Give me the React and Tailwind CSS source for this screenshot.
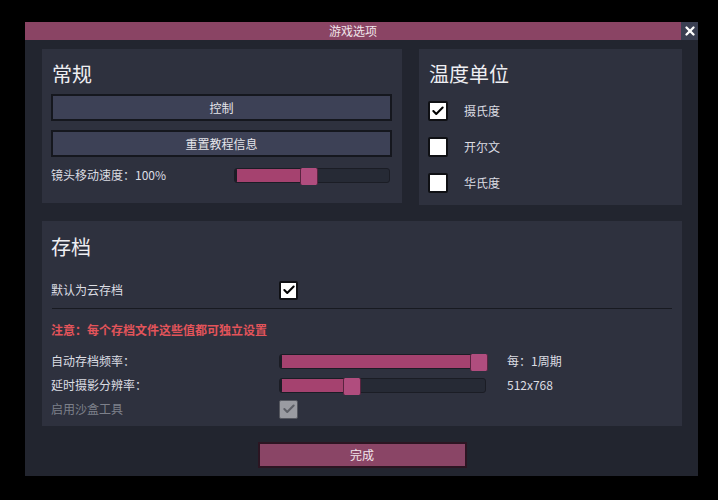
import { Check, X } from 'lucide-react'

const FONT = { fontFamily: '"Noto Sans CJK SC", "Noto Sans", sans-serif' }

function Slider({ width, fill }) {
  return (
    <div className="relative h-[15px] rounded-[3px] border border-[#1b1d25] bg-[#262a35]" style={{ width }}>
      <div className="absolute left-0 top-0 h-full rounded-l-[2px] border-l-2 border-[#1b1d25] bg-[#a5426f]" style={{ width: fill }} />
      <div
        className="absolute -top-[1px] h-[17px] w-[18px] rounded-[2px] border-x border-[#5a2440] bg-[#b04d7e]"
        style={{ left: fill - 1 }}
      />
    </div>
  )
}

function Box({ checked, disabled, size = 20 }) {
  return (
    <div
      className={
        disabled
          ? 'flex items-center justify-center rounded-[2px] bg-[#9a9ba1] border border-[#55575f]'
          : 'flex items-center justify-center rounded-[2px] bg-white border-2 border-[#0f1014]'
      }
      style={{ width: size, height: size }}
    >
      {checked && (
        <Check className={disabled ? 'w-3.5 h-3.5 text-[#5d5f66]' : 'w-3.5 h-3.5 text-black'} strokeWidth={3.5} />
      )}
    </div>
  )
}

function MenuButton({ children }) {
  return (
    <div className="h-[27px] w-full flex items-center justify-center border-2 border-[#15171e] bg-[#3d4156] text-[12px] text-[#e4e4ea]">
      {children}
    </div>
  )
}

export default function App() {
  return (
    <div className="w-[718px] h-[500px] bg-black pt-[22px] pl-[25px]" style={FONT}>
      <div className="w-[673px] h-[454px] flex flex-col bg-[#22252f]">
        {/* title bar */}
        <div className="h-[18px] flex shrink-0">
          <div className="flex-1 flex items-center justify-center bg-[#8a4464] text-[12px] text-[#f0e4ea]">
            游戏选项
          </div>
          <div className="w-[17px] flex items-center justify-center bg-[#3a3f52]">
            <X className="w-3.5 h-3.5 text-white" strokeWidth={4} />
          </div>
        </div>

        <div className="flex-1 flex flex-col pt-[9px] pl-[17px] pr-[16px]">
          <div className="flex gap-[17px] h-[156px]">
            {/* general */}
            <div className="w-[360px] h-[154px] bg-[#2e313e] px-[9px] pt-[11px]">
              <div className="text-[20px] leading-[28px] text-[#eeeef2] pl-[1px]">常规</div>
              <div className="mt-[6px] flex flex-col gap-[9px] pr-[1px]">
                <MenuButton>控制</MenuButton>
                <MenuButton>重置教程信息</MenuButton>
              </div>
              <div className="mt-[9px] flex items-center justify-between pr-[3px]">
                <span className="text-[12px] text-[#dcdde3]">镜头移动速度：100%</span>
                <Slider width={156} fill={66} />
              </div>
            </div>

            {/* temperature */}
            <div className="flex-1 bg-[#2e313e] pl-[9px] pt-[11px]">
              <div className="text-[20px] leading-[28px] text-[#eeeef2] pl-[1px]">温度单位</div>
              <div className="mt-[13px] flex flex-col gap-[16px]">
                {[
                  ['摄氏度', true],
                  ['开尔文', false],
                  ['华氏度', false],
                ].map(([label, on]) => (
                  <div key={label} className="flex items-center gap-[16px]">
                    <Box checked={on} />
                    <span className="text-[12px] text-[#dcdde3]">{label}</span>
                  </div>
                ))}
              </div>
            </div>
          </div>

          {/* saves */}
          <div className="mt-[16px] h-[205px] bg-[#2e313e] px-[9px] pt-[12px]">
            <div className="text-[20px] leading-[28px] text-[#eeeef2]">存档</div>
            <div className="mt-[19px] flex items-center h-[20px]">
              <span className="w-[228px] text-[12px] text-[#dcdde3]">默认为云存档</span>
              <Box checked size={19} />
            </div>
            <div className="mt-[8px] mx-[1px] h-[1px] bg-[#181a21]" />
            <div className="mt-[12px] text-[12px] font-bold text-[#e2545a]">注意：每个存档文件这些值都可独立设置</div>
            <div className="mt-[14px] flex items-center h-[16px]">
              <span className="w-[228px] text-[12px] text-[#dcdde3]">自动存档频率：</span>
              <Slider width={209} fill={191} />
              <span className="ml-[19px] text-[12px] text-[#dcdde3]">每：1周期</span>
            </div>
            <div className="mt-[8px] flex items-center h-[16px]">
              <span className="w-[228px] text-[12px] text-[#dcdde3]">延时摄影分辨率：</span>
              <Slider width={207} fill={64} />
              <span className="ml-[21px] text-[12px] text-[#dcdde3]">512x768</span>
            </div>
            <div className="mt-[6px] flex items-center h-[20px]">
              <span className="w-[228px] text-[12px] text-[#7d808a]">启用沙盒工具</span>
              <Box checked disabled size={19} />
            </div>
          </div>

          <div className="mt-[16px] flex justify-center">
            <div className="w-[209px] h-[26px] flex items-center justify-center border-2 border-[#2c1522] bg-[#8a4566] text-[12px] text-[#f2e6ec]">
              完成
            </div>
          </div>
        </div>
      </div>
    </div>
  )
}
